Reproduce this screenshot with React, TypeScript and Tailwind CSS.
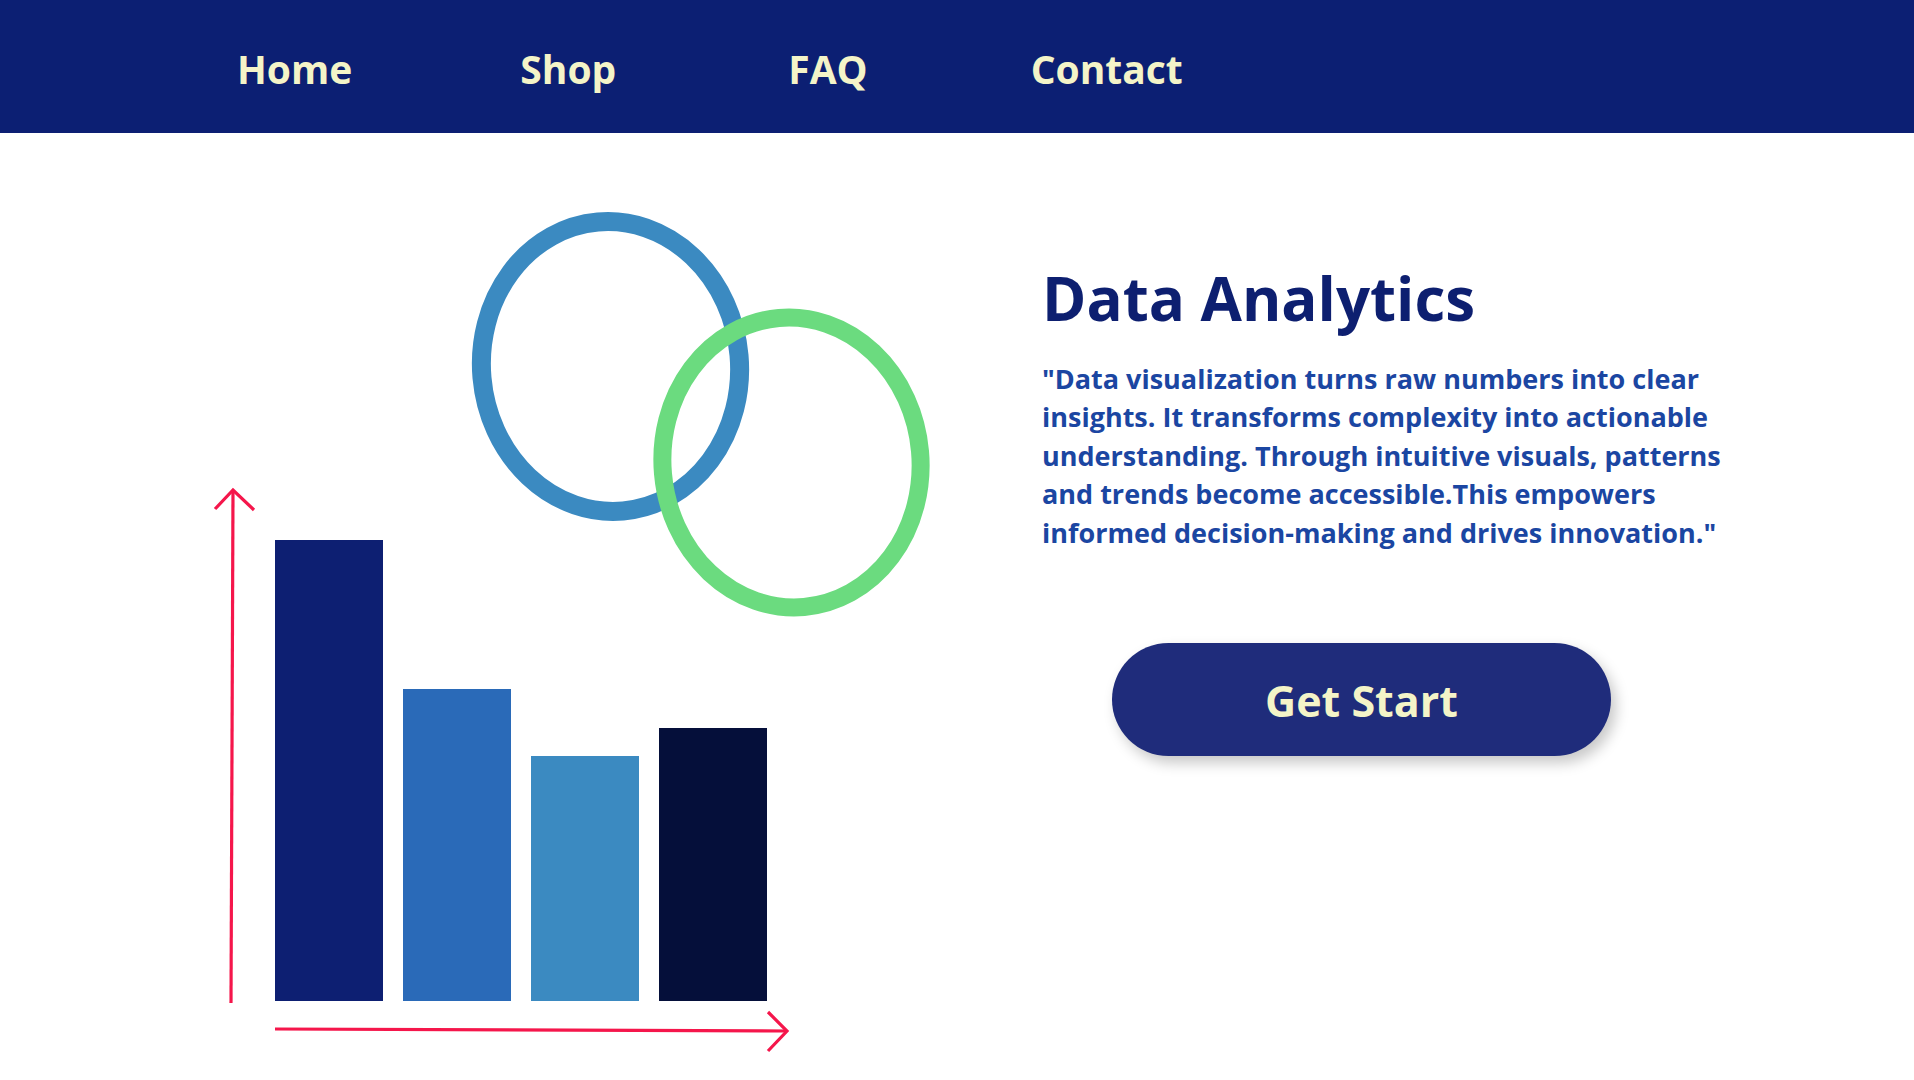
import React from "react";

const lines = [
  "\"Data visualization turns raw numbers into clear",
  "insights. It transforms complexity into actionable",
  "understanding. Through intuitive visuals, patterns",
  "and trends become accessible.This empowers",
  "informed decision-making and drives innovation.\"",
];

function Illustration() {
  return (
    <svg width="1044" height="947" viewBox="0 133 1044 947" className="block shrink-0">
      <rect x="275" y="540" width="108" height="461" fill="#0d1f72" />
      <rect x="403" y="689" width="108" height="312" fill="#2a6ab8" />
      <rect x="531" y="756" width="108" height="245" fill="#3b8ac1" />
      <rect x="659" y="728" width="108" height="273" fill="#050f3a" />
      <g stroke="#f5164b" strokeWidth="3.2" fill="none" strokeLinecap="butt" strokeLinejoin="miter">
        <path d="M233 490 L231 1003" />
        <path d="M215 509 L233 490 L254 510" />
        <path d="M275 1029 L787 1031" />
        <path d="M768 1012 L787 1031 L768 1051" />
      </g>
      <ellipse cx="610.5" cy="366.5" rx="129" ry="145" fill="none" stroke="#3b8ac1" strokeWidth="19" transform="rotate(-5 610.5 366.5)" />
      <ellipse cx="791.5" cy="462.5" rx="129" ry="145" fill="none" stroke="#6bdb7f" strokeWidth="18" transform="rotate(-5 791.5 462.5)" />
    </svg>
  );
}

export default function App() {
  return (
    <div className="w-[1914px] h-[1080px] bg-white overflow-hidden" style={{ fontFamily: '"Open Sans", "Noto Sans", sans-serif' }}>
      <nav className="h-[133px] bg-[#0c1f73] flex items-center pl-[237px] pt-[4px]">
        <div className="flex items-center text-[#f4f4c8] font-bold text-[39px] leading-none">
          <a className="mr-[168px]">Home</a>
          <a className="mr-[172px]">Shop</a>
          <a className="mr-[163px]">FAQ</a>
          <a>Contact</a>
        </div>
      </nav>
      <main className="flex">
        <Illustration />
        <div className="flex flex-col pt-[135px] -ml-[2px]">
          <h1 className="text-[60px] leading-[60px] font-bold text-[#0d1f70] whitespace-nowrap">Data Analytics</h1>
          <p className="mt-[32px] text-[27px] leading-[38.4px] font-bold text-[#1b46a2] whitespace-nowrap">
            {lines.map((l) => (
              <span key={l} className="block">{l}</span>
            ))}
          </p>
          <button className="mt-[91px] ml-[70px] w-[499px] h-[113px] pt-[4px] rounded-full bg-[#1f2c7b] text-[#f4f4c8] text-[43px] font-bold shadow-[5px_7px_14px_rgba(0,0,0,0.22)]">
            Get Start
          </button>
        </div>
      </main>
    </div>
  );
}
